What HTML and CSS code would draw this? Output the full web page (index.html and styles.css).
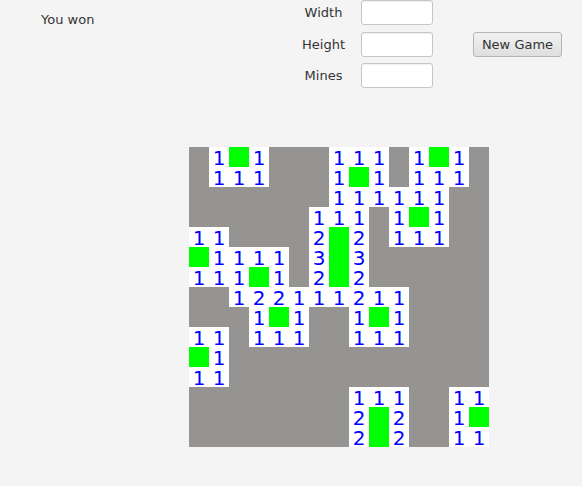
FILE: index.html
```html
<!DOCTYPE html>
<html>
<head>
<meta charset="utf-8">
<link rel="stylesheet" href="styles.css">
</head>
<body>
<div class="app">
  <div class="header">
    <div class="status">You won</div>
    <div class="form">
      <div class="lbl r1">Width</div><div class="field r1"></div>
      <div class="lbl r2">Height</div><div class="field r2"></div>
      <div class="lbl r3">Mines</div><div class="field r3"></div>
      <div class="btn r2">New Game</div>
    </div>
  </div>
  <div class="board">
    <!-- r0 -->
    <div class="c g"></div><div class="c n">1</div><div class="c m"></div><div class="c n">1</div><div class="c g"></div><div class="c g"></div><div class="c g"></div><div class="c n">1</div><div class="c n">1</div><div class="c n">1</div><div class="c g"></div><div class="c n">1</div><div class="c m"></div><div class="c n">1</div><div class="c g"></div>
    <!-- r1 -->
    <div class="c g"></div><div class="c n">1</div><div class="c n">1</div><div class="c n">1</div><div class="c g"></div><div class="c g"></div><div class="c g"></div><div class="c n">1</div><div class="c m"></div><div class="c n">1</div><div class="c g"></div><div class="c n">1</div><div class="c n">1</div><div class="c n">1</div><div class="c g"></div>
    <!-- r2 -->
    <div class="c g"></div><div class="c g"></div><div class="c g"></div><div class="c g"></div><div class="c g"></div><div class="c g"></div><div class="c g"></div><div class="c n">1</div><div class="c n">1</div><div class="c n">1</div><div class="c n">1</div><div class="c n">1</div><div class="c n">1</div><div class="c g"></div><div class="c g"></div>
    <!-- r3 -->
    <div class="c g"></div><div class="c g"></div><div class="c g"></div><div class="c g"></div><div class="c g"></div><div class="c g"></div><div class="c n">1</div><div class="c n">1</div><div class="c n">1</div><div class="c g"></div><div class="c n">1</div><div class="c m"></div><div class="c n">1</div><div class="c g"></div><div class="c g"></div>
    <!-- r4 -->
    <div class="c n">1</div><div class="c n">1</div><div class="c g"></div><div class="c g"></div><div class="c g"></div><div class="c g"></div><div class="c n">2</div><div class="c m"></div><div class="c n">2</div><div class="c g"></div><div class="c n">1</div><div class="c n">1</div><div class="c n">1</div><div class="c g"></div><div class="c g"></div>
    <!-- r5 -->
    <div class="c m"></div><div class="c n">1</div><div class="c n">1</div><div class="c n">1</div><div class="c n">1</div><div class="c g"></div><div class="c n">3</div><div class="c m"></div><div class="c n">3</div><div class="c g"></div><div class="c g"></div><div class="c g"></div><div class="c g"></div><div class="c g"></div><div class="c g"></div>
    <!-- r6 -->
    <div class="c n">1</div><div class="c n">1</div><div class="c n">1</div><div class="c m"></div><div class="c n">1</div><div class="c g"></div><div class="c n">2</div><div class="c m"></div><div class="c n">2</div><div class="c g"></div><div class="c g"></div><div class="c g"></div><div class="c g"></div><div class="c g"></div><div class="c g"></div>
    <!-- r7 -->
    <div class="c g"></div><div class="c g"></div><div class="c n">1</div><div class="c n">2</div><div class="c n">2</div><div class="c n">1</div><div class="c n">1</div><div class="c n">1</div><div class="c n">2</div><div class="c n">1</div><div class="c n">1</div><div class="c g"></div><div class="c g"></div><div class="c g"></div><div class="c g"></div>
    <!-- r8 -->
    <div class="c g"></div><div class="c g"></div><div class="c g"></div><div class="c n">1</div><div class="c m"></div><div class="c n">1</div><div class="c g"></div><div class="c g"></div><div class="c n">1</div><div class="c m"></div><div class="c n">1</div><div class="c g"></div><div class="c g"></div><div class="c g"></div><div class="c g"></div>
    <!-- r9 -->
    <div class="c n">1</div><div class="c n">1</div><div class="c g"></div><div class="c n">1</div><div class="c n">1</div><div class="c n">1</div><div class="c g"></div><div class="c g"></div><div class="c n">1</div><div class="c n">1</div><div class="c n">1</div><div class="c g"></div><div class="c g"></div><div class="c g"></div><div class="c g"></div>
    <!-- r10 -->
    <div class="c m"></div><div class="c n">1</div><div class="c g"></div><div class="c g"></div><div class="c g"></div><div class="c g"></div><div class="c g"></div><div class="c g"></div><div class="c g"></div><div class="c g"></div><div class="c g"></div><div class="c g"></div><div class="c g"></div><div class="c g"></div><div class="c g"></div>
    <!-- r11 -->
    <div class="c n">1</div><div class="c n">1</div><div class="c g"></div><div class="c g"></div><div class="c g"></div><div class="c g"></div><div class="c g"></div><div class="c g"></div><div class="c g"></div><div class="c g"></div><div class="c g"></div><div class="c g"></div><div class="c g"></div><div class="c g"></div><div class="c g"></div>
    <!-- r12 -->
    <div class="c g"></div><div class="c g"></div><div class="c g"></div><div class="c g"></div><div class="c g"></div><div class="c g"></div><div class="c g"></div><div class="c g"></div><div class="c n">1</div><div class="c n">1</div><div class="c n">1</div><div class="c g"></div><div class="c g"></div><div class="c n">1</div><div class="c n">1</div>
    <!-- r13 -->
    <div class="c g"></div><div class="c g"></div><div class="c g"></div><div class="c g"></div><div class="c g"></div><div class="c g"></div><div class="c g"></div><div class="c g"></div><div class="c n">2</div><div class="c m"></div><div class="c n">2</div><div class="c g"></div><div class="c g"></div><div class="c n">1</div><div class="c m"></div>
    <!-- r14 -->
    <div class="c g"></div><div class="c g"></div><div class="c g"></div><div class="c g"></div><div class="c g"></div><div class="c g"></div><div class="c g"></div><div class="c g"></div><div class="c n">2</div><div class="c m"></div><div class="c n">2</div><div class="c g"></div><div class="c g"></div><div class="c n">1</div><div class="c n">1</div>
  </div>
</div>
</body>
</html>
```
FILE: styles.css
```css
html, body {
  margin: 0;
  padding: 0;
  background: #f4f4f4;
}
body {
  width: 582px;
  height: 486px;
  overflow: hidden;
  font-family: "DejaVu Sans", sans-serif;
  font-size: 13px;
  color: #333333;
}
.app {
  display: flex;
  flex-direction: column;
}
.header {
  display: flex;
  height: 88px;
}
.status {
  width: 259px;
  padding-left: 41px;
  padding-top: 12px;
  line-height: 15px;
  box-sizing: content-box;
}
.form {
  display: grid;
  grid-template-columns: 47px 72px 89px;
  grid-template-rows: 32px 31px 25px;
  column-gap: 14px;
}
.form .lbl {
  grid-column: 1;
  text-align: center;
  line-height: 25px;
  height: 25px;
  align-self: start;
}
.form .field {
  grid-column: 2;
  align-self: start;
  height: 25px;
  box-sizing: border-box;
  background: #ffffff;
  border: 1px solid #c6c6c6;
  border-radius: 3px;
  box-shadow: inset 0 1px 1px rgba(0,0,0,0.06);
}
.form .btn {
  grid-column: 3;
  margin-left: 26px;
  width: 89px;
  height: 25px;
  box-sizing: border-box;
  align-self: start;
  border: 1px solid #b5b5b5;
  border-radius: 3px;
  background: linear-gradient(#f2f2f2, #dedede);
  text-align: center;
  line-height: 23px;
  color: #333333;
}
.r1 { grid-row: 1; }
.r2 { grid-row: 2; }
.r3 { grid-row: 3; }
.board {
  margin-top: 59px;
  margin-left: 189px;
  display: grid;
  grid-template-columns: repeat(15, 20px);
  grid-auto-rows: 20px;
  width: 300px;
}
.c {
  width: 20px;
  height: 20px;
  overflow: visible;
}
.g { background: #969492; }
.m { background: #00ff00; }
.n {
  background: #ffffff;
  color: #0000ff;
  font-size: 20px;
  line-height: 22px;
  text-align: center;
}
```
